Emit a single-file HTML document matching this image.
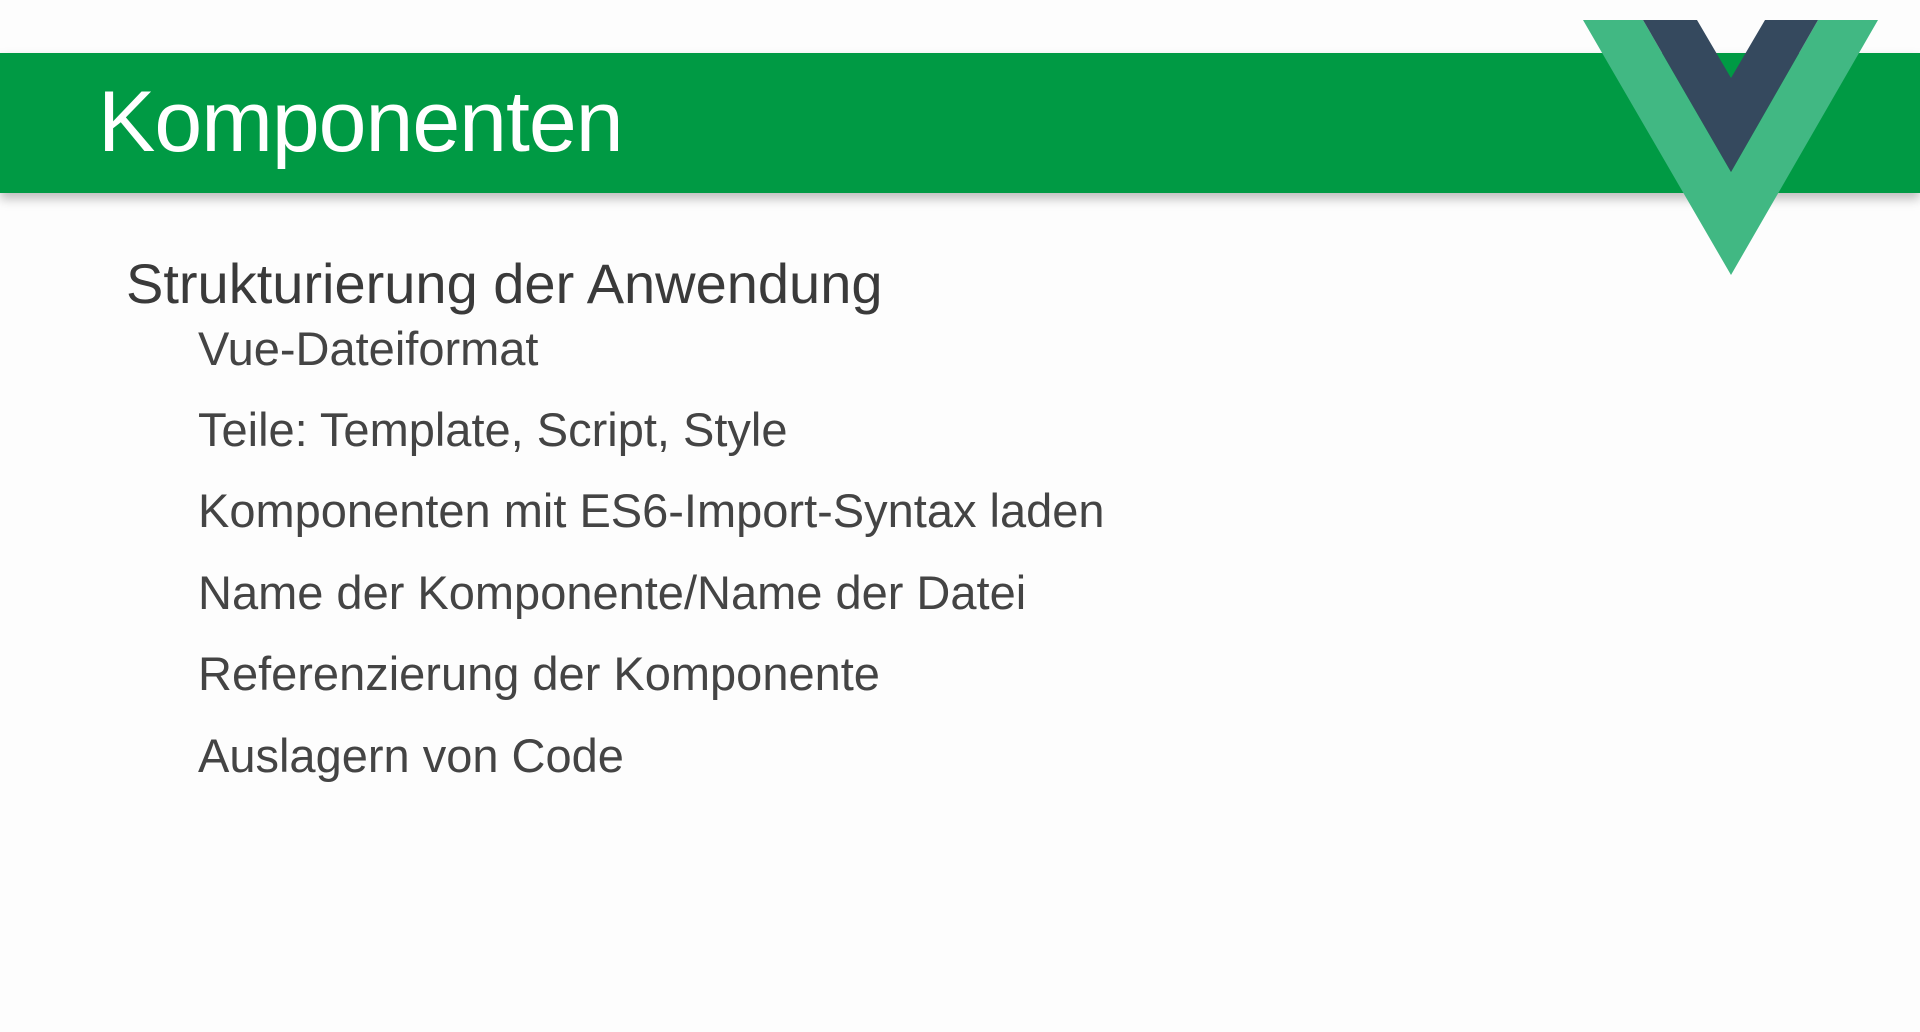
<!DOCTYPE html>
<html><head><meta charset="utf-8"><style>
html,body{margin:0;padding:0;width:1920px;height:1032px;overflow:hidden;background:#fdfdfd;font-family:"Liberation Sans",sans-serif;}
.bar{position:absolute;left:0;top:53px;width:1920px;height:140px;background:#009a44;box-shadow:0 6px 10px rgba(0,0,0,0.25);}
.title{position:absolute;left:98px;top:72px;font-size:86px;color:#fff;font-weight:300;letter-spacing:-1px;line-height:100px;}
.h{position:absolute;left:126px;top:249px;font-size:56px;color:#3a3a3a;line-height:70px;}
.i{position:absolute;left:198px;font-size:47px;color:#444;line-height:60px;}
svg{position:absolute;left:0;top:0;}
</style></head><body>
<div class="bar"></div>
<div class="title">Komponenten</div>
<svg width="1920" height="300">
<polygon points="1583,20 1643,20 1731,172 1818,20 1878,20 1731,275" fill="#41b883"/>
<polygon points="1643,20 1697,20 1731,78 1765,20 1818,20 1731,172" fill="#35495e"/>
</svg>
<div class="h">Strukturierung der Anwendung</div>
<div class="i" style="top:319px">Vue-Dateiformat</div>
<div class="i" style="top:400px">Teile: Template, Script, Style</div>
<div class="i" style="top:481px">Komponenten mit ES6-Import-Syntax laden</div>
<div class="i" style="top:563px">Name der Komponente/Name der Datei</div>
<div class="i" style="top:644px">Referenzierung der Komponente</div>
<div class="i" style="top:726px">Auslagern von Code</div>
</body></html>
